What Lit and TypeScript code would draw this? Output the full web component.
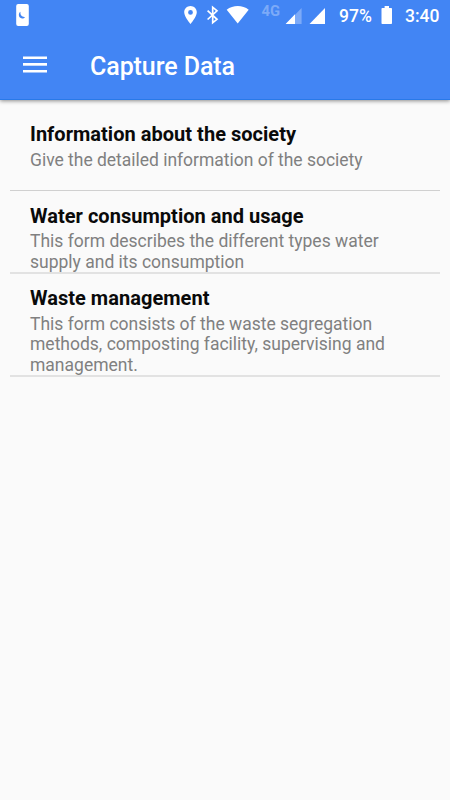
import { LitElement, html, svg, css } from "lit";
import { customElement } from "lit/decorators.js";

const forms = [
  { title: "Information about the society", lines: ["Give the detailed information of the society"], cls: "first" },
  { title: "Water consumption and usage", lines: ["This form describes the different types water", "supply and its consumption"], cls: "second" },
  {
    title: "Waste management",
    lines: ["This form consists of the waste segregation", "methods, composting facility, supervising and", "management."],
    cls: "third",
  },
];

@customElement("status-bar")
class StatusBar extends LitElement {
  static styles = css`
    :host { display: block; height: 30px; color: #fff; }
    .bar { display: flex; height: 30px; }
    svg { display: block; flex: none; }
    .left { width: 184px; }
    .icons { width: 155px; }
    .pct { width: 42px; font-size: 17.5px; font-weight: 500; line-height: 32px; white-space: nowrap; }
    .batt { width: 24px; }
    .time { font-size: 17.5px; font-weight: 500; line-height: 32px; white-space: nowrap; }
    .net { font-size: 14px; font-weight: 700; fill: #7caaf8; font-family: Roboto, sans-serif; }
  `;
  render() {
    return html`<div class="bar">
      <svg class="left" width="184" height="30" viewBox="0 0 184 30">
        <rect x="16.2" y="4" width="12.6" height="22" rx="2" fill="#fff" />
        <path d="M20.5 11.8C18.3 13.2 18.4 16.4 20.3 17.8C21.8 19 24 18.6 25 16.9C22.5 17.5 19.8 15 20.5 11.8Z" fill="#4285f4" />
      </svg>
      <svg class="icons" width="155" height="30" viewBox="184 0 155 30">
        ${svg`
        <path fill="#fff" fill-rule="evenodd" d="M190.5 6C187 6 184.2 8.8 184.2 12.3C184.2 17 190.5 24 190.5 24S196.8 17 196.8 12.3C196.8 8.8 194 6 190.5 6ZM190.5 10A2.4 2.4 0 1 1 190.5 14.8A2.4 2.4 0 1 1 190.5 10Z"/>
        <path fill="none" stroke="#fff" stroke-width="1.7" d="M207.6 10.6L217 19.3L212.7 22.7V7.2L217 10.8L207.6 19.5"/>
        <path fill="#fff" d="M226.7 9.7C233 4.8 242.6 4.8 248.7 9.7L237.7 23.4Z"/>
        <text class="net" x="261.5" y="16" textLength="18.5" lengthAdjust="spacingAndGlyphs">4G</text>
        <path fill="#7caaf8" d="M301.6 8V24H286Z"/>
        <path fill="#fff" d="M295 14.2V24H285.6Z"/>
        <path fill="#fff" d="M325 8V24H309.5Z"/>`}
      </svg>
      <span class="pct">97%</span>
      <svg class="batt" width="24" height="30" viewBox="0 0 24 30">
        <path fill="#fff" d="M3.6 6H8V8H10.2Q11 8 11 8.8V23.2Q11 24 10.2 24H1.3Q.5 24 .5 23.2V8.8Q.5 8 1.3 8H3.6Z" />
      </svg>
      <span class="time">3:40</span>
    </div>`;
  }
}

@customElement("app-root")
class AppRoot extends LitElement {
  static styles = css`
    :host { display: block; height: 800px; overflow: hidden; background: #fafafa; font-family: Roboto, sans-serif; }
    header { height: 100px; background: #4285f4; color: #fff; box-shadow: 0 1px 4px rgba(0, 0, 0, 0.45); box-sizing: border-box; border-bottom: 1px solid #2979e8; }
    .toolbar { display: flex; height: 69px; }
    .menu { display: block; width: 90px; height: 69px; flex: none; }
    h1 { margin: 0; font-size: 25px; font-weight: 500; line-height: 74px; letter-spacing: -0.08px; white-space: nowrap; }
    main { padding: 0 10px; }
    section { box-sizing: border-box; padding-left: 20px; white-space: nowrap; }
    .first { height: 91px; padding-top: 22px; border-bottom: 1px solid #d0d0d0; }
    .second { height: 83px; padding-top: 13px; border-bottom: 2px solid #e2e2e2; }
    .third { height: 103px; padding-top: 12px; border-bottom: 2px solid #e2e2e2; }
    h2 { margin: 0 0 3.5px; font-size: 20px; line-height: 24px; font-weight: 700; letter-spacing: 0.03px; color: #0a0a0a; }
    .first h2 { margin-bottom: 4px; }
    .second h2 { margin-bottom: 3px; }
    p { margin: 0; font-size: 17.5px; line-height: 20.5px; color: #808080; }
    .first p { letter-spacing: -0.02px; }
  `;
  render() {
    return html`
      <header>
        <status-bar></status-bar>
        <div class="toolbar">
          <svg class="menu" viewBox="0 0 90 69" fill="#fff">
            <rect x="23" y="26.5" width="24" height="2.5" />
            <rect x="23" y="33" width="24" height="2.7" />
            <rect x="23" y="40" width="24" height="2.5" />
          </svg>
          <h1>Capture Data</h1>
        </div>
      </header>
      <main>
        ${forms.map((f) => html`<section class=${f.cls}><h2>${f.title}</h2>${f.lines.map((l) => html`<p>${l}</p>`)}</section>`)}
      </main>
    `;
  }
}
